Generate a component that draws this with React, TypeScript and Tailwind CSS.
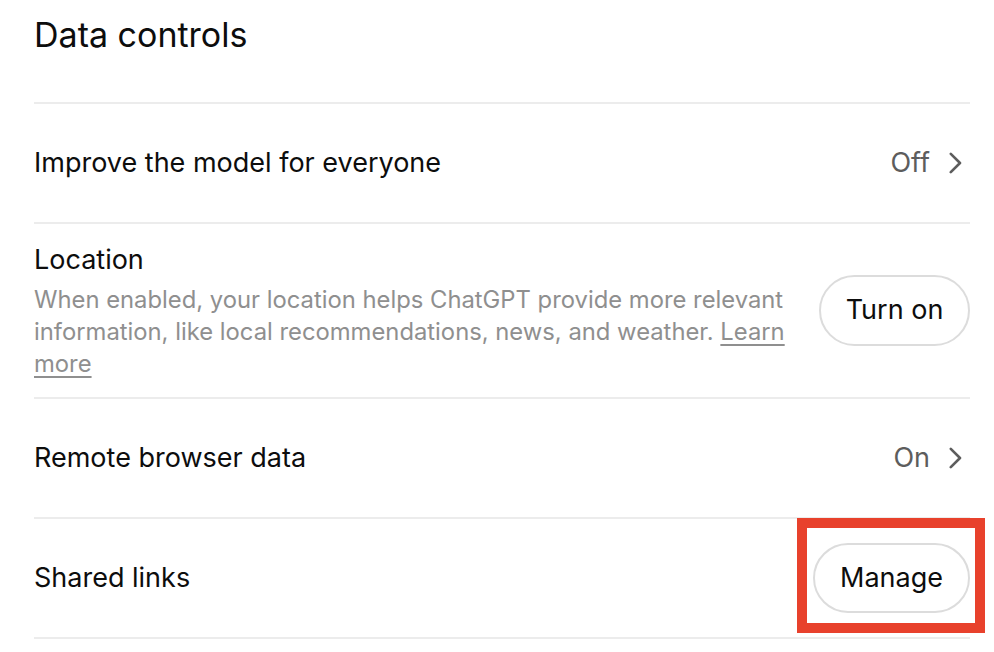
function Divider() {
  return <div className="h-[2px] bg-[#ececec]" />;
}

function Chevron() {
  return (
    <svg width="13" height="22" viewBox="0 0 13 22" fill="none" className="shrink-0">
      <polyline
        points="1.8,1.8 11,11 1.8,20.2"
        stroke="#5d5d5d"
        strokeWidth="2.6"
        strokeLinecap="round"
        strokeLinejoin="round"
      />
    </svg>
  );
}

function ValueRow({ label, value }: { label: string; value: string }) {
  return (
    <div className="flex h-[118px] items-center justify-between">
      <span className="text-[27px] text-[#0d0d0d]">{label}</span>
      <div className="flex items-center gap-[19px] pr-[8px] text-[27px] text-[#5d5d5d]">
        <span>{value}</span>
        <Chevron />
      </div>
    </div>
  );
}

export default function App() {
  return (
    <div className="relative h-[652px] w-[994px] overflow-hidden bg-white pl-[34px] pr-[24px] font-['Inter',sans-serif]">
      {/* header */}
      <div className="flex h-[102px] items-start pt-[12px]">
        <h1 className="text-[34px] leading-[46px] text-[#0d0d0d]">Data controls</h1>
      </div>
      <Divider />

      <ValueRow label="Improve the model for everyone" value="Off" />
      <Divider />

      {/* location */}
      <div className="flex h-[173px] items-center justify-between gap-4">
        <div className="min-w-0 flex-1 pt-[2px]">
          <p className="text-[27px] leading-[34px] text-[#0d0d0d]">Location</p>
          <p className="mt-[7px] whitespace-nowrap text-[23.8px] leading-[32px] text-[#8f8f8f]">
            When enabled, your location helps ChatGPT provide more relevant
            <br />
            information, like local recommendations, news, and weather.{" "}
            <span className="underline underline-offset-4">Learn</span>
            <br />
            <span className="underline underline-offset-4">more</span>
          </p>
        </div>
        <button className="h-[71px] w-[151px] shrink-0 rounded-full border-2 border-[#dcdcdc] text-[27px] text-[#0d0d0d]">
          Turn on
        </button>
      </div>
      <Divider />

      <ValueRow label="Remote browser data" value="On" />
      <Divider />

      {/* shared links */}
      <div className="flex h-[118px] items-center justify-between">
        <span className="text-[27px] text-[#0d0d0d]">Shared links</span>
        <button className="h-[70px] w-[157px] rounded-full border-2 border-[#dcdcdc] text-[27px] text-[#0d0d0d]">
          Manage
        </button>
      </div>
      <Divider />

      {/* annotation highlight */}
      <div className="absolute left-[797px] top-[518px] h-[115px] w-[188px] border-[10px] border-[#e8412c]" />
    </div>
  );
}
